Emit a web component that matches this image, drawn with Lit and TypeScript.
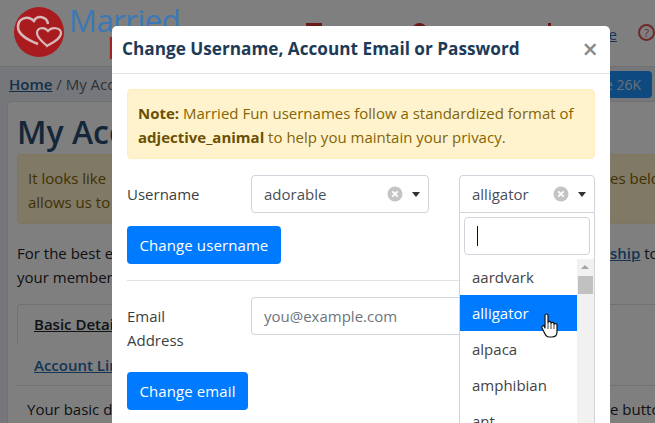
import { LitElement, html, css } from "lit";
import { customElement } from "lit/decorators.js";

const clearIcon = html`<span class="clear"><svg viewBox="0 0 16 16" width="16" height="16"><circle cx="8" cy="8" r="7.5" fill="#c4c4c4"/><path d="M5.3 5.3l5.4 5.4M10.700 5.300l-5.400 5.400" stroke="#fff" stroke-width="1.800"/></svg></span>`;
const caret = html`<span class="caret"></span>`;

@customElement("app-root")
export class AppRoot extends LitElement {
  static styles = css`
    :host { display: block; position: relative; width: 655px; height: 423px; overflow: hidden; background: #eceff4; font-family: "Open Sans", "Noto Sans", sans-serif; font-size: 15px; line-height: 24px; color: #212529; }
    * { box-sizing: border-box; }
    a { color: #2a6aa8; }
    .header { height: 67px; background: #fff; border-bottom: 1px solid #dee2e6; display: flex; padding: 7px 0 0 14px; gap: 5px; white-space: nowrap; }
    .logo { flex: none; position: relative; z-index: 1; }
    .brand { color: #3a78b8; font-size: 31px; letter-spacing: -.5px; line-height: 30px; position: relative; z-index: 1; width: 150px; margin-top: -2px; }
    .brand div { color: #a82024; padding-left: 38px; margin-top: -3px; }
    .nav { flex: 1; display: flex; align-items: flex-start; padding-top: 16px; }
    .nav i { display: block; flex: none; background: #d0342c; }
    .i1 { width: 16px; height: 14px; margin-left: 89px; }
    .i2 { width: 15px; height: 15px; border-radius: 50%; margin-left: 90px; }
    .i3 { width: 3px; height: 15px; margin-left: 121px; }
    .nav a { margin: 1px 0 0 4px; font-size: 15px; line-height: 20px; color: #2a6aa8; }
    .help { flex: none; width: 17px; height: 17px; border: 2px solid #d9534f; border-radius: 50%; color: #d9534f; font-size: 11px; line-height: 13px; text-align: center; margin: 1px 0 0 21px; }
    .crumb { height: 34px; display: flex; justify-content: space-between; align-items: center; padding: 0 3px 0 9px; font-size: 15px; }
    .crumb a { color: #2a5f94; font-weight: 600; }
    .crumb span { color: #5a6570; }
    .upgrade { background: #1c94ff; color: #cfe3f7; border-radius: 4px; height: 27px; line-height: 27px; padding: 0 11px 0 0; font-size: 14px; width: 100px; text-align: right; }
    .card { margin: 0 -60px 0 7px; background: #fff; border: 1px solid #dee2e6; border-radius: 4px; padding: 0 9px; height: 330px; }
    h1 { margin: 8px 0 0; font-size: 32px; line-height: 44px; font-weight: 600; color: #2a4d72; }
    .warn { background: #fff3cd; border: 1px solid #ffeeba; color: #856404; border-radius: 4px; padding: 11px 10px; height: 70px; margin-bottom: 17px; display: flex; white-space: nowrap; }
    .warn span:first-child, .para span:first-child { flex: none; width: 582px; }
    .para { margin: 0 0 15px; white-space: nowrap; display: flex; height: 48px; }
    .para span:first-child { width: 593px; }
    .para a { font-weight: 600; }
    .tabs { font-weight: 600; margin-bottom: 2px; border: 1px solid #dee2e6; border-bottom: 0; border-radius: 4px 4px 0 0; padding: 13px 16px 0; height: 40px; line-height: 12px; }
    .tabs a { color: #212529; }
    .tab2 { font-weight: 600; padding: 11px 17px 0; border-bottom: 1px solid #dee2e6; height: 40px; line-height: 16px; }
    .basic { padding: 11px 10px; display: flex; white-space: nowrap; }
    .basic span:first-child { flex: none; width: 583px; }
    .backdrop { position: absolute; inset: 0; background: rgba(0,0,0,.5); }
    .modal { position: absolute; z-index: 2; left: 112px; top: 26px; width: 498px; height: 420px; background: #fff; border-radius: 5px; overflow: hidden; }
    .m-head { height: 48px; border-bottom: 1px solid #dee2e6; display: flex; align-items: center; justify-content: space-between; padding: 0 12px 2px 10px; }
    .m-title { font-size: 17.2px; font-weight: 700; color: #1d3a57; white-space: nowrap; }
    .close { color: #8a8a8a; font-size: 27px; font-weight: 600; line-height: 24px; }
    .m-body { padding: 15px; color: #3a3f44; }
    .alert { background: #fff3cd; border: 1px solid #ffeeba; color: #856404; border-radius: 4px; padding: 11px 10px; height: 70px; margin-bottom: 16px; }
    .alert b { font-weight: 700; color: #6b5003; }
    .row { display: grid; grid-template-columns: 124px 178px 30px 136px; height: 38px; align-items: center; margin-bottom: 13px; }
    .select { height: 38px; border: 1px solid #ced4da; border-radius: 4px; display: flex; align-items: center; padding-left: 12px; color: #495057; }
    .select .val { flex: 1; }
    .clear { display: flex; margin-right: 9px; }
    .caret { width: 0; height: 0; border-left: 4px solid transparent; border-right: 4px solid transparent; border-top: 5px solid #333; margin-right: 8px; }
    .select.open { border-radius: 4px 4px 0 0; }
    .btn { display: inline-block; background: #007bff; color: #fff; height: 38px; line-height: 38px; border-radius: 4px; padding: 0 12.5px; font-size: 15px; letter-spacing: .1px; }
    hr { border: 0; border-top: 1px solid #dee2e6; margin: 16px 0; }
    .email { display: grid; grid-template-columns: 124px 344px; margin-bottom: 13px; height: 62px; }
    .input { height: 38px; line-height: 36px; border: 1px solid #ced4da; border-radius: 4px; padding-left: 12px; color: #6c757d; }
    .label { padding-top: 7px; width: 80px; }
    .dropdown { position: absolute; left: 347px; top: 187px; width: 136px; height: 240px; background: #fff; border: 1px solid #ced4da; border-top: 0; }
    .search { margin: 4px 4px 0; height: 38px; border: 1px solid #ced4da; border-radius: 4px; padding: 8px 12px; }
    .cursor { width: 1px; height: 20px; background: #111; }
    .list { display: flex; margin-top: 4px; }
    .items { flex: none; width: 117px; }
    .item { height: 36px; line-height: 36px; padding-left: 12px; color: #444; }
    .item.sel { background: #007bff; color: #fff; }
    .scroll { width: 17px; background: #f1f1f1; height: 200px; position: relative; padding: 17px 1px 0; }
    .scroll::before { content: ""; position: absolute; left: 4px; top: 6px; border-left: 4px solid transparent; border-right: 4px solid transparent; border-bottom: 4px solid #a3a3a3; }
    .thumb { height: 18px; background: #c1c1c1; }
    .hand { position: absolute; z-index: 3; left: 541px; top: 313px; }
  `;

  render() {
    return html`
      <div class="header">
        <svg class="logo" width="50" height="50" viewBox="0 0 50 50">
          <circle cx="25" cy="25" r="25" fill="#a81c20"/>
          <path d="M24 37C14 33 4 28 4 20 4 11 14 8 20 14 23 8 33 9 34 17" fill="none" stroke="#d8b8b8" stroke-width="2.500"/>
          <path d="M33 39C28 34 23 31 23 26 23 21 30 19 34 24 38 19 47 21 47 26 47 32 38 36 33 39z" fill="#a81c20" stroke="#d8b8b8" stroke-width="2.200"/>
        </svg>
        <div class="brand">Married<div>Fun</div></div>
        <div class="nav">
          <i class="i1"></i><i class="i2"></i><i class="i3"></i>
          <a href="#">Treasure</a><span class="help">?</span>
        </div>
      </div>
      <div class="crumb"><div><a href="#">Home</a> <span>/ My Account</span></div><div class="upgrade">Share 26K</div></div>
      <div class="card">
        <h1>My Account</h1>
        <div class="warn"><span>It looks like<br>allows us to</span><span>es below</span></div>
        <div class="para"><span>For the best experience<br>your membership</span><span><a href="#">ship</a> to</span></div>
        <div class="tabs"><a href="#">Basic Details</a></div>
        <div class="tab2"><a href="#">Account Links</a></div>
        <div class="basic"><span>Your basic details</span><span>e button</span></div>
      </div>
      <div class="backdrop"></div>
      <div class="modal">
        <div class="m-head"><span class="m-title">Change Username, Account Email or Password</span><span class="close">×</span></div>
        <div class="m-body">
          <div class="alert"><b>Note:</b> Married Fun usernames follow a standardized format of <b>adjective_animal</b> to help you maintain your privacy.</div>
          <div class="row">
            <span>Username</span>
            <div class="select"><span class="val">adorable</span>${clearIcon}${caret}</div>
            <span></span>
            <div class="select open"><span class="val">alligator</span>${clearIcon}${caret}</div>
          </div>
          <a class="btn">Change username</a>
          <hr>
          <div class="email">
            <div class="label">Email Address</div>
            <div class="input">you@example.com</div>
          </div>
          <a class="btn">Change email</a>
        </div>
        <div class="dropdown">
          <div class="search"><div class="cursor"></div></div>
          <div class="list">
            <div class="items">
              <div class="item">aardvark</div>
              <div class="item sel">alligator</div>
              <div class="item">alpaca</div>
              <div class="item">amphibian</div>
              <div class="item">ant</div>
            </div>
            <div class="scroll"><div class="thumb"></div></div>
          </div>
        </div>
      </div>
      <svg class="hand" width="18" height="26" viewBox="0 0 18 26">
        <path d="M4 2.500c0-2 3-2 3 0v7c0-1.500 3-1.500 3 0v1c0-1.500 3-1.500 3 0v1c0-1.300 3-1.300 3 0V19c0 3-2 5-5 5H8c-2 0-3-1-4-3l-3-6c-.8-2 1.500-3 2.500-1.500L4 15z" fill="#fff" stroke="#111" stroke-width="1.200" stroke-linejoin="round"/>
        <path d="M7 10v6M10 11v5M13 12v4" stroke="#111" stroke-width=".8"/>
      </svg>
    `;
  }
}
